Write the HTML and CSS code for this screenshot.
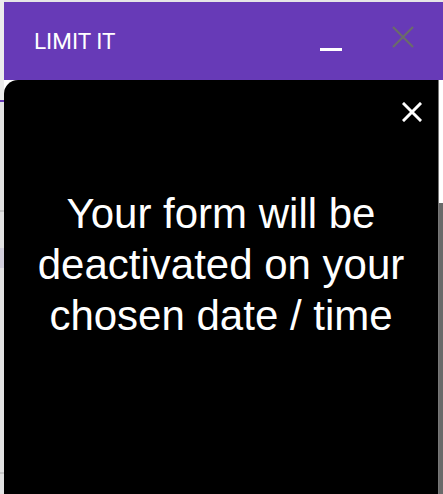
FILE: index.html
```html
<!DOCTYPE html>
<html>
<head>
<meta charset="utf-8">
<link rel="stylesheet" href="styles.css">
</head>
<body>
<div class="page">
  <div class="side">
    <div class="side-seg s1"></div>
    <div class="side-line purple"></div>
    <div class="side-seg s2"></div>
    <div class="side-line"></div>
    <div class="side-seg s3"></div>
    <div class="side-block"></div>
    <div class="side-seg s4"></div>
    <div class="side-line"></div>
    <div class="side-seg s5"></div>
  </div>
  <div class="main">
    <div class="topstrip"></div>
    <div class="window">
      <header class="titlebar">
        <div class="title">LIMIT IT</div>
        <div class="minimize"></div>
        <svg class="close-gray" width="22" height="22" viewBox="0 0 22 22">
          <path d="M1 1 L21 21 M21 1 L1 21" stroke="#6b6b6b" stroke-width="2.2" fill="none"/>
        </svg>
      </header>
      <div class="content">
        <div class="panel">
          <div class="panel-top">
            <svg class="close-white" width="20" height="20" viewBox="0 0 20 20">
              <path d="M2 2 L18 18 M18 2 L2 18" stroke="#fff" stroke-width="3" fill="none" stroke-linecap="square"/>
            </svg>
          </div>
          <p class="message">Your form will be deactivated on your chosen date / time</p>
        </div>
        <div class="scrollbar"><div class="thumb"></div></div>
      </div>
    </div>
  </div>
</div>
</body>
</html>
```
FILE: styles.css
```css
html, body {
  margin: 0;
  padding: 0;
  width: 443px;
  height: 494px;
  overflow: hidden;
  background: #fff;
}
.page {
  display: flex;
  height: 494px;
}
.side {
  width: 4px;
  display: flex;
  flex-direction: column;
  background: #dedede;
}
.side-seg { background: #e2e2e2; }
.s1 { height: 100px; background: #ececec; }
.side-line { height: 2px; background: #c8c8c8; }
.side-line.purple { background: #673ab7; }
.s2 { height: 108px; }
.s3 { height: 36px; }
.side-block { height: 20px; background: #d2cfdc; }
.s4 { height: 204px; }
.s5 { flex: 1; }
.main {
  flex: 1;
  display: flex;
  flex-direction: column;
}
.topstrip {
  height: 2px;
  background: #e6e6e6;
}
.window {
  flex: 1;
  display: flex;
  flex-direction: column;
}
.titlebar {
  height: 78px;
  background: #673ab7;
  display: flex;
  align-items: center;
  padding-left: 30px;
  padding-right: 29px;
  box-sizing: border-box;
}
.title {
  flex: 1;
  color: #fff;
  font-family: Roboto, "Liberation Sans", sans-serif;
  font-size: 22.5px;
  margin-top: 0;
}
.minimize {
  width: 22px;
  height: 3px;
  background: #fff;
  margin-top: 16px;
  margin-right: 50px;
}
.close-gray {
  display: block;
  margin-bottom: 8px;
}
.content {
  flex: 1;
  display: flex;
  background: #fff;
}
.panel {
  flex: 1;
  background: #000;
  border-top-left-radius: 14px;
  display: flex;
  flex-direction: column;
}
.panel-top {
  display: flex;
  justify-content: flex-end;
  padding: 22px 16px 0 0;
}
.close-white { display: block; }
.message {
  margin: 66px 10px 0;
  color: #fff;
  text-align: center;
  font-family: "Liberation Sans", Arial, sans-serif;
  font-size: 42px;
  line-height: 51px;
}
.scrollbar {
  width: 4px;
  border-left: 1px solid #777;
  background: #fff;
  display: flex;
  flex-direction: column;
}
.thumb {
  margin-top: 123px;
  flex: 1;
  background: #6a6a6a;
}
```
